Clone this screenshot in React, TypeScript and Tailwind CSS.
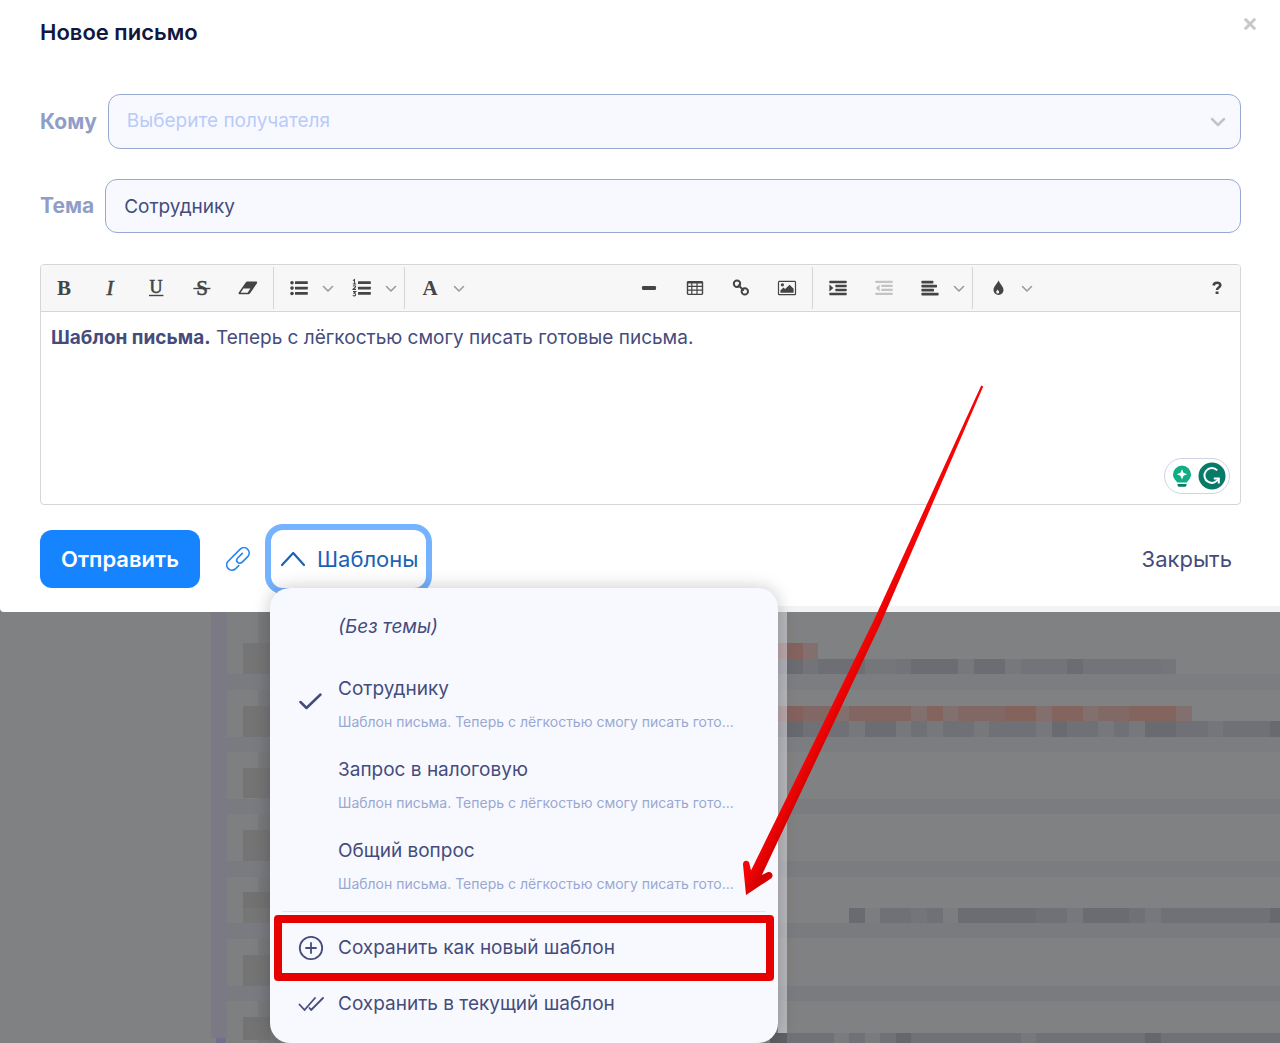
import React, { useState } from "react";

type Tile = [x: number, y: number, w: number, h: number, fill: string];

const backdropTiles: Tile[] = [
  [227, 612, 53, 431, "#7e7f81"],
  [258, 612, 22, 431, "#78797b"],
  [227, 674, 53, 16, "#7a7b80"],
  [227, 737, 53, 15, "#7a7b80"],
  [227, 799, 53, 15, "#7a7b80"],
  [227, 861, 53, 16, "#7a7b80"],
  [227, 923, 53, 16, "#7a7b80"],
  [227, 986, 53, 15, "#7a7b80"],
  [211, 612, 16, 426, "#7a7984"],
  [216, 1038, 10, 5, "#716f8c"],
  [243, 643, 27, 31, "#757575"],
  [243, 706, 27, 31, "#747474"],
  [243, 768, 27, 30, "#747475"],
  [243, 830, 27, 31, "#747474"],
  [243, 892, 27, 16, "#727272"],
  [243, 908, 27, 15, "#767677"],
  [243, 955, 27, 31, "#747474"],
  [243, 1017, 27, 23, "#737373"],
  [770, 674, 510, 16, "#7c7d81"],
  [770, 737, 510, 15, "#7c7d81"],
  [770, 799, 510, 15, "#7b7c7f"],
  [770, 861, 510, 16, "#7b7c7f"],
  [770, 923, 510, 15, "#7a7b7e"],
  [770, 986, 510, 15, "#7a7b7e"],
  [770, 643, 33, 16, "#84635e"],
  [803, 643, 15, 16, "#83706e"],
  [770, 659, 406, 15, "#73747a"],
  [787, 659, 16, 15, "#6b6c72"],
  [818, 659, 47, 15, "#6e6f75"],
  [865, 659, 31, 15, "#75767a"],
  [911, 659, 47, 15, "#6c6d73"],
  [958, 659, 16, 15, "#77787b"],
  [974, 659, 31, 15, "#6c6d73"],
  [1005, 659, 16, 15, "#77787b"],
  [1067, 659, 16, 15, "#6c6d73"],
  [1161, 659, 15, 15, "#75767a"],
  [770, 706, 422, 15, "#81706d"],
  [770, 706, 33, 15, "#84615c"],
  [803, 706, 31, 15, "#816864"],
  [849, 706, 62, 15, "#826661"],
  [927, 706, 16, 15, "#84645f"],
  [958, 706, 47, 15, "#826864"],
  [1005, 706, 31, 15, "#84635d"],
  [1052, 706, 31, 15, "#84645f"],
  [1098, 706, 31, 15, "#816965"],
  [1129, 706, 47, 15, "#84645f"],
  [1176, 706, 16, 15, "#81706d"],
  [770, 721, 510, 16, "#707177"],
  [787, 721, 16, 16, "#68696f"],
  [849, 721, 16, 16, "#77787b"],
  [865, 721, 31, 16, "#6c6d73"],
  [896, 721, 15, 16, "#77787b"],
  [927, 721, 16, 16, "#77787b"],
  [974, 721, 15, 16, "#77787b"],
  [1036, 721, 16, 16, "#77787b"],
  [1052, 721, 15, 16, "#6a6b71"],
  [1098, 721, 16, 16, "#77787b"],
  [1129, 721, 16, 16, "#77787b"],
  [1145, 721, 31, 16, "#6a6b71"],
  [1208, 721, 15, 16, "#75767a"],
  [1270, 721, 10, 16, "#696a70"],
  [849, 908, 431, 15, "#707177"],
  [849, 908, 16, 15, "#6a6b71"],
  [865, 908, 15, 15, "#7c7d7f"],
  [911, 908, 16, 15, "#74757a"],
  [943, 908, 15, 15, "#7c7d7f"],
  [958, 908, 78, 15, "#6c6d73"],
  [1067, 908, 16, 15, "#77787b"],
  [1083, 908, 46, 15, "#6b6c71"],
  [1145, 908, 16, 15, "#77787b"],
  [1270, 908, 10, 15, "#68696f"],
  [770, 1033, 510, 10, "#707177"],
  [770, 1033, 17, 10, "#5f6065"],
  [834, 1033, 15, 10, "#7a7b7e"],
  [865, 1033, 15, 10, "#7a7b7e"],
  [896, 1033, 15, 10, "#66676d"],
  [1021, 1033, 15, 10, "#77787b"],
  [1145, 1033, 16, 10, "#66676d"],
];

function Backdrop() {
  return (
    <svg
      aria-hidden="true"
      className="pointer-events-none absolute left-0 top-0 h-[1043px] w-[1280px]"
      viewBox="0 0 1280 1043"
      shapeRendering="crispEdges"
    >
      {backdropTiles.map(([x, y, w, h, fill], i) => (
        <rect key={i} x={x} y={y} width={w} height={h} fill={fill} />
      ))}
    </svg>
  );
}

function EdgeHaze() {
  return (
    <svg
      aria-hidden="true"
      className="pointer-events-none absolute left-0 top-0 h-[1043px] w-[1280px]"
      viewBox="0 0 1280 1043"
      shapeRendering="crispEdges"
    >
      <rect x="778" y="612" width="9" height="421" fill="#eeeef6" fillOpacity="0.5" />
      <rect x="778" y="606" width="502" height="6" fill="#f2f3f3" />
    </svg>
  );
}

function Glyph({ children, dim = false }: { children: React.ReactNode; dim?: boolean }) {
  return (
    <svg
      aria-hidden="true"
      viewBox="0 0 24 24"
      className={dim ? "h-6 w-6 text-[#c4c4c4]" : "h-6 w-6 text-[#444444]"}
      fill="currentColor"
      stroke="none"
    >
      {children}
    </svg>
  );
}

function Letter({ children, italic = false, bold = false, size = 21, y = 19 }: {
  children: string;
  italic?: boolean;
  bold?: boolean;
  size?: number;
  y?: number;
}) {
  return (
    <text
      x="12"
      y={y}
      textAnchor="middle"
      fontFamily="Liberation Serif, serif"
      fontSize={size}
      fontWeight={bold ? 700 : 400}
      fontStyle={italic ? "italic" : "normal"}
      stroke="currentColor"
      strokeWidth={bold ? 0 : 0.6}
    >
      {children}
    </text>
  );
}

function Tool({ label, children, disabled = false }: { label: string; children: React.ReactNode; disabled?: boolean }) {
  return (
    <button
      type="button"
      aria-label={label}
      disabled={disabled}
      className="flex h-[46px] w-[46px] shrink-0 items-center justify-center"
    >
      <Glyph dim={disabled}>{children}</Glyph>
    </button>
  );
}

function Caret({ label }: { label: string }) {
  return (
    <button type="button" aria-label={label} className="flex h-[46px] w-[17px] shrink-0 items-center">
      <svg
        aria-hidden="true"
        viewBox="0 0 12 12"
        className="h-3 w-3 text-[#999999]"
        fill="none"
        stroke="currentColor"
        strokeWidth="1.5"
        strokeLinecap="round"
        strokeLinejoin="round"
      >
        <path d="M1.5 4.5 6 9l4.5-4.5" />
      </svg>
    </button>
  );
}

function Separator() {
  return <span className="mx-[2px] h-[42px] w-px shrink-0 bg-[#d6d6d6]" />;
}

function ListBars() {
  return (
    <>
      <rect x="8" y="5.300" width="12.800" height="2.700" rx=".5" />
      <rect x="8" y="10.700" width="12.800" height="2.700" rx=".5" />
      <rect x="8" y="16.100" width="12.800" height="2.700" rx=".5" />
    </>
  );
}

function Toolbar() {
  return (
    <div
      role="toolbar"
      aria-label="Форматирование"
      className="flex h-[47px] items-center overflow-hidden rounded-t-[3px] border-b border-[#d6d6d6] bg-[#f7f7f7]"
    >
      <Tool label="Полужирный">
        <Letter bold>B</Letter>
      </Tool>
      <Tool label="Курсив">
        <Letter italic>I</Letter>
      </Tool>
      <Tool label="Подчёркнутый">
        <Letter size={18} y={17}>U</Letter>
        <rect x="5" y="18.800" width="14.400" height="1.400" />
      </Tool>
      <Tool label="Зачёркнутый">
        <Letter>S</Letter>
        <rect x="3.400" y="11.800" width="17" height="1.400" />
      </Tool>
      <Tool label="Очистить форматирование">
        <path
          fillRule="evenodd"
          d="M11.200 5.600h8.800c1 0 1.500.9 1 1.700l-6.900 9.900c-.4.700-1.100 1.100-1.900 1.100H3.900c-1.100 0-1.700-1-1.100-1.900L9.700 6.400c.3-.5.900-.8 1.500-.8ZM7.400 12.600l-2.800 4.200h7l2.800-4.200Z"
        />
      </Tool>
      <Separator />
      <Tool label="Маркированный список">
        <circle cx="5" cy="6.700" r="1.800" />
        <circle cx="5" cy="12.100" r="1.800" />
        <circle cx="5" cy="17.500" r="1.800" />
        <ListBars />
      </Tool>
      <Caret label="Виды маркеров" />
      <Tool label="Нумерованный список">
        <g fill="none" stroke="currentColor" strokeWidth="1.100">
          <path d="M3 4.600 4.500 3.600V8M2.800 8h3.400" />
          <path d="M3 10.400c.4-1 2.800-1 2.600.3-.1.900-2.100 1.500-2.600 2.700h3" />
          <path d="M3 15.600h2.700l-1.500 1.600c1.800 0 2 2.700 0 2.700-.6 0-1.100-.2-1.400-.6" />
        </g>
        <ListBars />
      </Tool>
      <Caret label="Виды нумерации" />
      <Separator />
      <Tool label="Шрифт">
        <Letter bold>A</Letter>
      </Tool>
      <Caret label="Выбор шрифта" />
      <span className="w-[156px]" />
      <Tool label="Линия">
        <rect x="5" y="10" width="14" height="4" rx="1.200" />
      </Tool>
      <Tool label="Таблица">
        <path
          fillRule="evenodd"
          d="M5.200 5h13.600c.8 0 1.400.600 1.400 1.400v11.200c0 .8-.600 1.400-1.400 1.400H5.200c-.8 0-1.400-.600-1.400-1.400V6.400C3.800 5.600 4.400 5 5.200 5Zm0 2.400v2.400h3v-2.400Zm4.200 0v2.400h4v-2.400Zm5.200 0v2.400h4.200v-2.400ZM5.200 10.900v2.600h3v-2.600Zm4.200 0v2.600h4v-2.600Zm5.200 0v2.600h4.200v-2.600ZM5.200 14.700v3h3v-3Zm4.200 0v3h4v-3Zm5.200 0v3h4.200v-3Z"
        />
      </Tool>
      <Tool label="Ссылка">
        <g fill="none" stroke="currentColor" strokeWidth="2" strokeLinecap="round">
          <circle cx="8" cy="7.800" r="3.200" />
          <circle cx="15.800" cy="15.400" r="3.200" />
          <path d="m9.600 9.400 4.600 4.600" />
        </g>
      </Tool>
      <Tool label="Изображение">
        <path
          fillRule="evenodd"
          d="M4.500 4.700h15c.9 0 1.600.7 1.600 1.600v11.400c0 .9-.7 1.600-1.600 1.600h-15c-.9 0-1.600-.7-1.600-1.600V6.300c0-.9.700-1.600 1.600-1.600Zm0 1.200c-.2 0-.4.200-.4.400v11.400c0 .2.200.4.400.4h15c.2 0 .4-.2.400-.4V6.300c0-.2-.2-.4-.4-.4Z"
        />
        <circle cx="7.400" cy="8.800" r="1.600" />
        <path d="M5.400 16.800v-2.300l3-3 1.700 1.600 4.500-4.400 4 4v4.100Z" />
      </Tool>
      <Separator />
      <Tool label="Увеличить отступ">
        <rect x="3.400" y="4.800" width="17.200" height="2.500" rx=".4" />
        <rect x="9.400" y="8.800" width="11.200" height="2.500" rx=".4" />
        <rect x="9.400" y="12.800" width="11.200" height="2.500" rx=".4" />
        <rect x="3.400" y="16.800" width="17.200" height="2.500" rx=".4" />
        <path d="M3.400 8.600v6.800l4-3.400Z" />
      </Tool>
      <Tool label="Уменьшить отступ" disabled>
        <rect x="3.400" y="4.800" width="17.200" height="2.300" rx=".4" />
        <rect x="9.400" y="8.800" width="11.200" height="2.300" rx=".4" />
        <rect x="9.400" y="12.800" width="11.200" height="2.300" rx=".4" />
        <rect x="3.400" y="16.800" width="17.200" height="2.300" rx=".4" />
        <path d="M7.600 8.600v6.800l-4-3.400Z" />
      </Tool>
      <Tool label="Выравнивание">
        <rect x="3.400" y="4.800" width="12" height="2.600" rx=".6" />
        <rect x="3.400" y="8.800" width="15.600" height="2.600" rx=".6" />
        <rect x="3.400" y="12.800" width="12.600" height="2.600" rx=".6" />
        <rect x="3.400" y="16.800" width="17.200" height="2.600" rx=".6" />
      </Tool>
      <Caret label="Виды выравнивания" />
      <Separator />
      <Tool label="Цвет">
        <path
          fillRule="evenodd"
          d="M12.500 4.200c.5 2.700 5 5.900 5 9.800a5 5 0 0 1-10 0c0-3.900 4.500-7.100 5-9.800Zm-1 9.200c-.5 1-1.300 1.700-1.300 2.700a1.500 1.500 0 0 0 3 0c0-1-1.200-1.700-1.700-2.700Z"
        />
      </Tool>
      <Caret label="Выбор цвета" />
      <button
        type="button"
        aria-label="Справка"
        className="ml-auto flex h-[46px] w-[46px] shrink-0 items-center justify-center"
      >
        <svg
          aria-hidden="true"
          viewBox="0 0 24 24"
          className="h-6 w-6 text-[#444444]"
          fill="none"
          stroke="currentColor"
          strokeWidth="2.600"
        >
          <path d="M8.600 9.500c.2-1.800 1.500-2.700 3.400-2.700 2 0 3.300.9 3.300 2.500 0 2.400-3.300 2-3.300 4.800" />
          <path d="M10.600 16.800h2.900" />
        </svg>
      </button>
    </div>
  );
}

function AssistantBadge() {
  return (
    <div className="absolute bottom-[10px] right-[10px] flex h-9 w-[66px] items-center justify-between rounded-full border border-[#cfd3e4] bg-white pl-[7px] pr-[3px]">
      <svg aria-hidden="true" viewBox="0 0 20 24" className="h-6 w-5">
        <path
          fill="#0fae85"
          d="M10 1.500a9 9 0 0 1 9 9c0 3-1.500 5-3.300 6.700-.4.400-.700.800-.700 1.300H5c0-.5-.3-.9-.7-1.300C2.500 15.500 1 13.500 1 10.500a9 9 0 0 1 9-9Z"
        />
        <path fill="#ffffff" d="m10 5.200 1.500 3.600 3.700 1.500-3.700 1.500L10 15.400l-1.500-3.600-3.700-1.500 3.700-1.500Z" />
        <path fill="#087d68" d="M5.500 20h9v1c0 1-.8 1.800-1.800 1.800H7.300c-1 0-1.800-.8-1.800-1.800Z" />
      </svg>
      <svg aria-hidden="true" viewBox="0 0 28 28" className="h-7 w-7">
        <circle cx="14" cy="14" r="13.500" fill="#087a69" />
        <g fill="none" stroke="#ffffff" strokeWidth="2">
          <path d="M19.200 8.400A7.400 7.400 0 1 0 20.800 16" />
          <path d="M15.800 16.600h5v5" />
        </g>
      </svg>
    </div>
  );
}

const preview = "Шаблон письма. Теперь с лёгкостью смогу писать гото...";
const templates = ["Сотруднику", "Запрос в налоговую", "Общий вопрос"];

function TemplateMenu({ value, onPick }: { value: string; onPick: (name: string) => void }) {
  return (
    <div
      role="menu"
      aria-label="Шаблоны"
      className="absolute -left-px top-full z-10 w-[508px] rounded-[20px] bg-[#f8f9ff] px-3 pb-[11px] pt-2 text-left text-[19px] text-[#454c7c] shadow-[0_0_18px_rgba(0,0,0,0.22)]"
    >
      <button
        type="button"
        role="menuitem"
        className="flex h-[62px] w-full items-center pl-14 italic"
      >
        (Без темы)
      </button>
      <div className="pt-2">
        {templates.map((name) => (
          <button
            key={name}
            type="button"
            role="menuitemradio"
            aria-checked={name === value}
            onClick={() => onPick(name)}
            className="flex h-[81px] w-full pl-4 pr-3 pt-[10px] text-left"
          >
            <span className="mt-3 h-6 w-10 shrink-0">
              {name === value && (
                <svg
                  aria-hidden="true"
                  viewBox="0 0 24 24"
                  className="h-6 w-6"
                  fill="none"
                  stroke="currentColor"
                  strokeWidth="2.500"
                  strokeLinecap="round"
                  strokeLinejoin="round"
                >
                  <path d="m2.500 14 6 6L22.500 6.500" />
                </svg>
              )}
            </span>
            <span className="flex flex-col gap-2">
              <span className="leading-[26px]">{name}</span>
              <span className="text-[14px] leading-6 text-[#9aa8d1]">{preview}</span>
            </span>
          </button>
        ))}
      </div>
      <hr className="mb-2 mt-[2px] h-px border-0 bg-[#dfe4f4]" />
      <div className="relative">
        <button type="button" role="menuitem" className="flex h-14 w-full items-center gap-[14px] pl-4">
          <svg
            aria-hidden="true"
            viewBox="0 0 26 26"
            className="h-[26px] w-[26px]"
            fill="none"
            stroke="currentColor"
            strokeWidth="1.800"
            strokeLinecap="round"
          >
            <circle cx="13" cy="13" r="11.200" />
            <path d="M8 13h10M13 8v10" />
          </svg>
          Сохранить как новый шаблон
        </button>
        <span className="pointer-events-none absolute -inset-x-2 -inset-y-[5px] rounded-[4px] border-8 border-[#e60000]" />
      </div>
      <button type="button" role="menuitem" className="flex h-14 w-full items-center gap-[14px] pl-4">
        <svg
          aria-hidden="true"
          viewBox="0 0 26 26"
          className="h-[26px] w-[26px]"
          fill="none"
          stroke="currentColor"
          strokeWidth="1.800"
          strokeLinecap="round"
          strokeLinejoin="round"
        >
          <path d="m1.500 13.500 5 5.500L17 7M11.500 17l1.600 2L25 7" />
        </svg>
        Сохранить в текущий шаблон
      </button>
    </div>
  );
}

function PointerArrow() {
  return (
    <svg
      aria-hidden="true"
      className="pointer-events-none absolute left-0 top-0 z-20 h-[1043px] w-[1280px]"
      viewBox="0 0 1280 1043"
    >
      <defs>
        <linearGradient id="shaft" gradientUnits="userSpaceOnUse" x1="868" y1="632" x2="880" y2="638">
          <stop offset="0" stopColor="#f50505" />
          <stop offset="1" stopColor="#d60000" />
        </linearGradient>
      </defs>
      <path
        fill="url(#shaft)"
        d="M981.200 385.500 873 622 751 870.500 749.500 864c-.6-4.500-6.800-4-6.500.5l3 30.500 25-16.500c3.600-2.800.4-8-3.600-6.200l-5.500 2.700L880 625 983.200 386.500Z"
      />
    </svg>
  );
}

export default function App() {
  const [template, setTemplate] = useState("Сотруднику");
  const [subject, setSubject] = useState("Сотруднику");
  const [open, setOpen] = useState(true);

  return (
    <div className="relative min-h-screen overflow-hidden bg-[#808182] font-['Inter',sans-serif] text-[#454c7c]">
      <Backdrop />
      <main className="relative rounded-bl-[4px] bg-white pb-6 pl-10 pr-[39px] pt-4">
        <header className="flex h-8 items-center justify-between">
          <h1 className="text-[22px] font-semibold text-[#12173f]">Новое письмо</h1>
          <button type="button" aria-label="Закрыть окно" className="absolute right-5 top-[14px] h-5 w-5">
            <svg
              aria-hidden="true"
              viewBox="0 0 20 20"
              className="h-5 w-5"
              fill="none"
              stroke="#c8c8c8"
              strokeWidth="3"
            >
              <path d="m4.800 4.800 10.400 10.400M15.200 4.800 4.800 15.200" />
            </svg>
          </button>
        </header>

        <div className="mt-[46px] flex h-[55px] items-center gap-[11px]">
          <label htmlFor="recipient" className="text-[21px] font-bold text-[#8f9dc7]">
            Кому
          </label>
          <div className="relative h-full flex-1">
            <select
              id="recipient"
              defaultValue=""
              className="h-full w-full appearance-none rounded-xl border border-[#97a8d3] bg-[#f8f9ff] pl-[18px] pr-12 text-[19px] text-[#b9cbf8] outline-none"
            >
              <option value="">Выберите получателя</option>
            </select>
            <svg
              aria-hidden="true"
              viewBox="0 0 16 16"
              className="pointer-events-none absolute right-[15px] top-5 h-4 w-4"
              fill="none"
              stroke="#c4c4c4"
              strokeWidth="2.500"
              strokeLinecap="round"
              strokeLinejoin="round"
            >
              <path d="m2 5 6 6 6-6" />
            </svg>
          </div>
        </div>

        <div className="mt-[30px] flex h-[54px] items-center gap-[11px]">
          <label htmlFor="subject" className="text-[21px] font-bold text-[#8f9dc7]">
            Тема
          </label>
          <input
            id="subject"
            type="text"
            value={subject}
            onChange={(e) => setSubject(e.target.value)}
            className="h-full min-w-0 flex-1 rounded-xl border border-[#97a8d3] bg-[#f8f9ff] px-[18px] text-[19px] text-[#454c7c] outline-none"
          />
        </div>

        <section className="relative mt-[31px] rounded-[4px] border border-[#d6d6d6]">
          <Toolbar />
          <div
            role="textbox"
            aria-label="Текст письма"
            aria-multiline="true"
            contentEditable
            suppressContentEditableWarning
            className="min-h-[192px] px-[10px] pt-3 text-[19px] leading-7 outline-none"
          >
            <b className="font-bold">Шаблон письма.</b> Теперь с лёгкостью смогу писать готовые письма.
          </div>
          <AssistantBadge />
        </section>

        <footer className="mt-[25px] flex h-[58px] items-center">
          <button
            type="button"
            className="h-full w-40 rounded-xl bg-[#1784ff] text-[22px] font-semibold text-white"
          >
            Отправить
          </button>
          <button type="button" aria-label="Прикрепить файл" className="ml-[26px]">
            <svg
              aria-hidden="true"
              viewBox="0 0 24 24"
              className="h-6 w-6"
              fill="none"
              stroke="#2b86f0"
              strokeWidth="1.700"
              strokeLinecap="round"
              strokeLinejoin="round"
            >
              <path d="m12.700 18.700-3.400 3.300A5.300 5.300 0 0 1 1.900 14.500L14.500 1.900A5.300 5.300 0 0 1 22 9.300l-6 6a3 3 0 0 1-4.300-4.300l4.600-4.600" />
            </svg>
          </button>
          <div className="relative ml-[21px] h-full">
            <button
              type="button"
              aria-haspopup="menu"
              aria-expanded={open}
              onClick={() => setOpen(!open)}
              className="flex h-full w-[155px] items-center gap-3 rounded-xl bg-white pl-[10px] text-[22px] text-[#1b62b5] ring-6 ring-[#75b2ff]"
            >
              <svg
                aria-hidden="true"
                viewBox="0 0 24 24"
                className="h-6 w-6 shrink-0"
                fill="none"
                stroke="currentColor"
                strokeWidth="2.200"
                strokeLinecap="round"
                strokeLinejoin="round"
              >
                <path d="M1 18 12.200 6 23 18" />
              </svg>
              Шаблоны
            </button>
            {open && <TemplateMenu value={template} onPick={setTemplate} />}
          </div>
          <button type="button" className="ml-auto pr-[9px] text-[22px]">
            Закрыть
          </button>
        </footer>
      </main>
      <EdgeHaze />
      <PointerArrow />
    </div>
  );
}
